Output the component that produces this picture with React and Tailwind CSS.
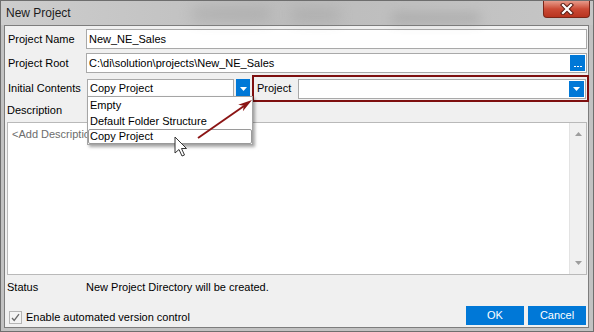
import React from 'react';

const BlueDrop = ({ className }) => (
  <div className={`flex items-center justify-center bg-[#0078d7] ${className}`}>
    <svg width="7" height="4" viewBox="0 0 7 4">
      <path d="M0 0h7L3.5 4z" fill="#fff" />
    </svg>
  </div>
);

const App = () => {
  return (
    <div className="relative w-[594px] h-[332px] overflow-hidden border border-[#6e6e6e] bg-[#c2c2c2] flex flex-col font-['Liberation_Sans',Arial,sans-serif] text-[11px] text-black">
      {/* Title bar */}
      <div className="relative h-[24px] flex items-center pl-[5px] bg-gradient-to-r from-[#cdcdcd] via-[#bcbcbc] to-[#c6c6c6]">
        <div className="absolute left-[190px] top-[6px] w-[80px] h-[14px] rounded-full bg-[#8c8c8c] opacity-30 blur-[7px]" />
        <div className="absolute left-[290px] top-[8px] w-[50px] h-[12px] rounded-full bg-[#8c8c8c] opacity-30 blur-[7px]" />
        <div className="absolute left-[390px] top-[12px] w-[90px] h-[10px] rounded-full bg-[#7c7c7c] opacity-30 blur-[6px]" />
        <span className="relative text-[12px] text-[#1c1c1c]">New Project</span>
      </div>

      {/* Close button */}
      <div className="absolute top-0 right-[3px] w-[47px] h-[17px] rounded-b-[4px] border border-t-0 border-[#7a2618] bg-gradient-to-b from-[#e69a8a] via-[#cb4a35] to-[#b8341f] flex items-center justify-center">
        <svg width="14" height="12" viewBox="0 0 14 12">
          <path d="M3 2l8 8M11 2l-8 8" stroke="#5a1d14" strokeWidth="4.2" strokeLinecap="square" />
          <path d="M3 2l8 8M11 2l-8 8" stroke="#fff" strokeWidth="2.2" strokeLinecap="square" />
        </svg>
      </div>

      {/* Client area */}
      <div className="ml-[3px] mr-[4px] mb-[3px] flex-1 border border-[#7d7d7d] bg-[#f0f0f0] flex flex-col pl-[3px] pr-[1px] pt-[3px]">
        {/* Project Name */}
        <div className="flex items-center h-[20px]">
          <div className="w-[78px] shrink-0">Project Name</div>
          <div className="flex-1 h-full border border-[#a9a9a9] bg-white flex items-center pl-[2px]">New_NE_Sales</div>
        </div>

        {/* Project Root */}
        <div className="flex items-center h-[20px] mt-[4px]">
          <div className="w-[78px] shrink-0">Project Root</div>
          <div className="flex-1 h-full border border-[#a9a9a9] bg-white flex items-center pl-[2px] pr-[1px]">
            <span className="flex-1">C:\di\solution\projects\New_NE_Sales</span>
            <div className="w-[15px] h-[16px] bg-[#0078d7] flex items-end justify-center gap-[1px] pb-[4px]">
              <span className="block w-[2px] h-[1px] bg-white" />
              <span className="block w-[2px] h-[1px] bg-white" />
              <span className="block w-[2px] h-[1px] bg-white" />
            </div>
          </div>
        </div>

        {/* Initial Contents */}
        <div className="flex items-center h-[27px] mt-[2px]">
          <div className="w-[78px] shrink-0">Initial Contents</div>
          <div className="ml-[1px] w-[163px] h-[19px] flex">
            <div className="flex-1 border border-[#a9a9a9] bg-white flex items-center pl-[2px]">Copy Project</div>
            <BlueDrop className="w-[14px] ml-[2px]" />
          </div>
          <div className="ml-[2px] flex-1 h-full -mr-[2px] border-2 border-[#7e0f0f] flex items-center pl-[3px] pr-[1px]">
            <div className="w-[41px] shrink-0">Project</div>
            <div className="flex-1 h-[20px] border border-[#a9a9a9] bg-white flex justify-end p-[1px]">
              <BlueDrop className="w-[15px]" />
            </div>
          </div>
        </div>

        {/* Description */}
        <div className="h-[20px] pt-[2px] leading-[13px] -ml-[1px]">Description</div>
        <div className="-ml-[1px] h-[153px] border border-[#b9b9b9] bg-white flex">
          <div className="flex-1 pl-[4px] pt-[3px] text-[#6d6d6d]">&lt;Add Description&gt;</div>
          <div className="w-[17px] bg-[#f0f0f0] border-l border-[#e3e3e3] flex flex-col items-center justify-between py-[9px]">
            <svg width="7" height="4" viewBox="0 0 7 4"><path d="M0 4h7L3.5 0z" fill="#9d9d9d" /></svg>
            <svg width="7" height="4" viewBox="0 0 7 4"><path d="M0 0h7L3.5 4z" fill="#9d9d9d" /></svg>
          </div>
        </div>

        {/* Status */}
        <div className="flex items-center h-[25px] -ml-[1px]">
          <div className="w-[79px] shrink-0">Status</div>
          <div>New Project Directory will be created.</div>
        </div>

        {/* Bottom row */}
        <div className="flex-1 flex items-start pt-[6px]">
          <div className="flex items-center mt-[3px] ml-[1px]">
            <div className="w-[13px] h-[13px] border border-[#b5b5b5] bg-[#f4f4f4] flex items-center justify-center">
              <svg width="9" height="9" viewBox="0 0 9 9">
                <path d="M1 5l2.2 2.5L8 1.2" stroke="#6a6a6a" strokeWidth="1.3" fill="none" />
              </svg>
            </div>
            <span className="ml-[4px]">Enable automated version control</span>
          </div>
          <div className="ml-auto mr-[1px] flex gap-[4px]">
            <button className="w-[58px] h-[19px] bg-[#0078d7] text-white text-[11px]">OK</button>
            <button className="w-[58px] h-[19px] bg-[#0078d7] text-white text-[11px]">Cancel</button>
          </div>
        </div>
      </div>

      {/* Open dropdown list */}
      <div className="absolute left-[86px] top-[95px] w-[166px] border border-[#a5a5a5] bg-white shadow-[2px_2px_3px_rgba(0,0,0,0.35)] flex flex-col">
        <div className="h-[16px] flex items-center pl-[2px]">Empty</div>
        <div className="h-[16px] flex items-center pl-[2px]">Default Folder Structure</div>
        <div className="h-[15px] flex items-center pl-[1px] border border-[#9a9a9a] rounded-[2px]">Copy Project</div>
      </div>

      {/* Annotation arrow and mouse pointer */}
      <svg className="absolute left-0 top-0 pointer-events-none" width="594" height="332" viewBox="0 0 594 332">
        <line x1="197" y1="137" x2="243" y2="105" stroke="#8b1414" strokeWidth="2" />
        <polygon points="251,99 241.9,110.3 242.8,104.8 237.2,103.8" fill="#8b1414" />
        <path
          d="M174 136 L174 152 L178 148.5 L181 155 L183.5 154 L180.5 147.5 L185.5 147.5 Z"
          fill="#fff"
          stroke="#333"
          strokeWidth="1"
          strokeLinejoin="round"
        />
      </svg>
    </div>
  );
};

export default App;
